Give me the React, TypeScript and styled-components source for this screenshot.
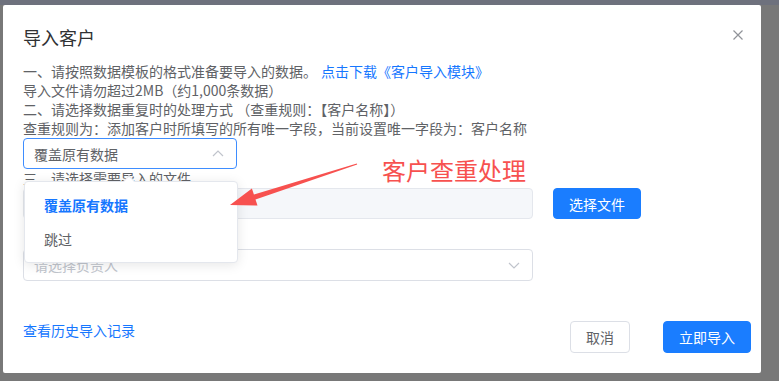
import React from "react";
import styled, { createGlobalStyle } from "styled-components";

const GlobalStyle = createGlobalStyle`
  html, body { margin: 0; padding: 0; }
  body {
    font-family: "Noto Sans CJK SC", "Noto Sans", "Liberation Sans", sans-serif;
    -webkit-font-smoothing: antialiased;
  }
  * { box-sizing: border-box; }
`;

const Backdrop = styled.div`
  width: 779px;
  height: 381px;
  padding: 5px 18px 8px 3px;
  background: linear-gradient(#6e717d 0 5px, #787878 5px);
  overflow: hidden;
`;

const Dialog = styled.div`
  position: relative;
  height: 368px;
  background: #fff;
  border-radius: 2px;
  padding: 20px 10px 20px 20px;
  display: flex;
  flex-direction: column;
`;

const Header = styled.div`
  display: flex;
  justify-content: space-between;
  align-items: flex-start;
`;

const Title = styled.div`
  font-size: 18px;
  line-height: 24px;
  color: #303133;
`;

const Close = styled.svg`
  width: 10px;
  height: 10px;
  margin-top: 5px;
  margin-right: 8px;
`;

const Body = styled.div`
  margin-top: 13px;
  display: flex;
  flex-direction: column;
  align-items: flex-start;
`;

const Line = styled.div`
  font-size: 14px;
  line-height: 19px;
  color: #606266;
  white-space: nowrap;
`;

const Spacer = styled.div<{ $h: number }>`
  height: ${(p) => p.$h}px;
`;

const Link = styled.span`
  color: #1677ff;
  margin-left: 4px;
  cursor: pointer;
`;

const Select = styled.div<{ $active?: boolean; $w: number; $h: number }>`
  width: ${(p) => p.$w}px;
  height: ${(p) => p.$h}px;
  border: 1px solid ${(p) => (p.$active ? "#3e8dff" : "#dcdfe6")};
  border-radius: 4px;
  background: #fff;
  display: flex;
  align-items: center;
  justify-content: space-between;
  padding: 0 12px 0 10px;
  font-size: 14px;
  color: #606266;
`;

const Placeholder = styled.span`
  color: #c0c4cc;
`;

const Chevron = styled.svg`
  width: 12px;
  height: 12px;
`;

const UploadRow = styled.div`
  display: flex;
  gap: 20px;
`;

const FileInput = styled.div`
  width: 510px;
  height: 31px;
  background: #f5f7fa;
  border: 1px solid #e4e7ed;
  border-radius: 4px;
`;

const Button = styled.button<{ $primary?: boolean; $w: number }>`
  width: ${(p) => p.$w}px;
  height: ${(p) => (p.$primary ? 31 : 32)}px;
  border-radius: 4px;
  border: 1px solid ${(p) => (p.$primary ? "#1a7dff" : "#dcdfe6")};
  background: ${(p) => (p.$primary ? "#1a7dff" : "#fff")};
  color: ${(p) => (p.$primary ? "#fff" : "#606266")};
  font-family: inherit;
  font-size: 14px;
  padding: 0;
  cursor: pointer;
`;

const Footer = styled.div`
  margin-top: auto;
  display: flex;
  justify-content: space-between;
  align-items: flex-start;
`;

const FooterLink = styled.span`
  font-size: 14px;
  line-height: 19px;
  color: #1677ff;
  cursor: pointer;
`;

const Actions = styled.div`
  display: flex;
  gap: 33px;
`;

const FooterButton = styled(Button)`
  height: 32px;
`;

const Dropdown = styled.div`
  position: absolute;
  left: 21px;
  top: 176px;
  width: 214px;
  padding: 6px 0;
  background: #fff;
  border: 1px solid #e4e7ed;
  border-radius: 4px;
  box-shadow: 0 2px 12px rgba(0, 0, 0, 0.1);
`;

const Notch = styled.div`
  position: absolute;
  top: -5px;
  left: 100px;
  width: 8px;
  height: 8px;
  background: #fff;
  border-left: 1px solid #e4e7ed;
  border-top: 1px solid #e4e7ed;
  transform: rotate(45deg);
`;

const Option = styled.div<{ $selected?: boolean }>`
  height: 34px;
  line-height: 34px;
  padding-left: 19px;
  font-size: 14px;
  color: ${(p) => (p.$selected ? "#1677ff" : "#606266")};
  font-weight: ${(p) => (p.$selected ? 700 : 400)};
`;

const Annotation = styled.div`
  position: absolute;
  left: 379px;
  top: 153px;
  font-size: 24px;
  line-height: 24px;
  color: #f7514f;
  white-space: nowrap;
`;

const ArrowLayer = styled.svg`
  position: absolute;
  left: -3px;
  top: -5px;
  width: 779px;
  height: 381px;
  pointer-events: none;
`;

export default function App() {
  return (
    <>
      <GlobalStyle />
      <Backdrop>
        <Dialog>
          <Header>
            <Title>导入客户</Title>
            <Close viewBox="0 0 10 10">
              <path d="M0.5 0.5 L9.5 9.5 M9.5 0.5 L0.5 9.5" stroke="#909399" strokeWidth="1.2" />
            </Close>
          </Header>
          <Body>
            <Line>
              一、请按照数据模板的格式准备要导入的数据。<Link>点击下载《客户导入模块》</Link>
            </Line>
            <Line>导入文件请勿超过2MB（约1,000条数据）</Line>
            <Line>二、请选择数据重复时的处理方式 （查重规则：【客户名称】）</Line>
            <Line>查重规则为：添加客户时所填写的所有唯一字段，当前设置唯一字段为：客户名称</Line>
            <Select $active $w={214} $h={31}>
              <span>覆盖原有数据</span>
              <Chevron viewBox="0 0 12 12">
                <path d="M1 8 L6 3 L11 8" fill="none" stroke="#c0c4cc" strokeWidth="1.2" />
              </Chevron>
            </Select>
            <Line>三、请选择需要导入的文件</Line>
            <UploadRow>
              <FileInput />
              <Button $primary $w={88}>选择文件</Button>
            </UploadRow>
            <Spacer $h={30} />
            <Select $w={510} $h={32}>
              <Placeholder>请选择负责人</Placeholder>
              <Chevron viewBox="0 0 12 12">
                <path d="M1 4 L6 9 L11 4" fill="none" stroke="#c0c4cc" strokeWidth="1.2" />
              </Chevron>
            </Select>
          </Body>
          <Footer>
            <FooterLink>查看历史导入记录</FooterLink>
            <Actions>
              <FooterButton $w={60}>取消</FooterButton>
              <FooterButton $primary $w={88}>立即导入</FooterButton>
            </Actions>
          </Footer>

          <Dropdown>
            <Notch />
            <Option $selected>覆盖原有数据</Option>
            <Option>跳过</Option>
          </Dropdown>

          <Annotation>客户查重处理</Annotation>
          <ArrowLayer viewBox="0 0 779 381">
            <polygon
              points="230,205 257.5,205.6 255.5,199.4 357.2,164.5 356.8,163.5 253.9,194.6 251.9,188.4"
              fill="#f7514f"
            />
          </ArrowLayer>
        </Dialog>
      </Backdrop>
    </>
  );
}
